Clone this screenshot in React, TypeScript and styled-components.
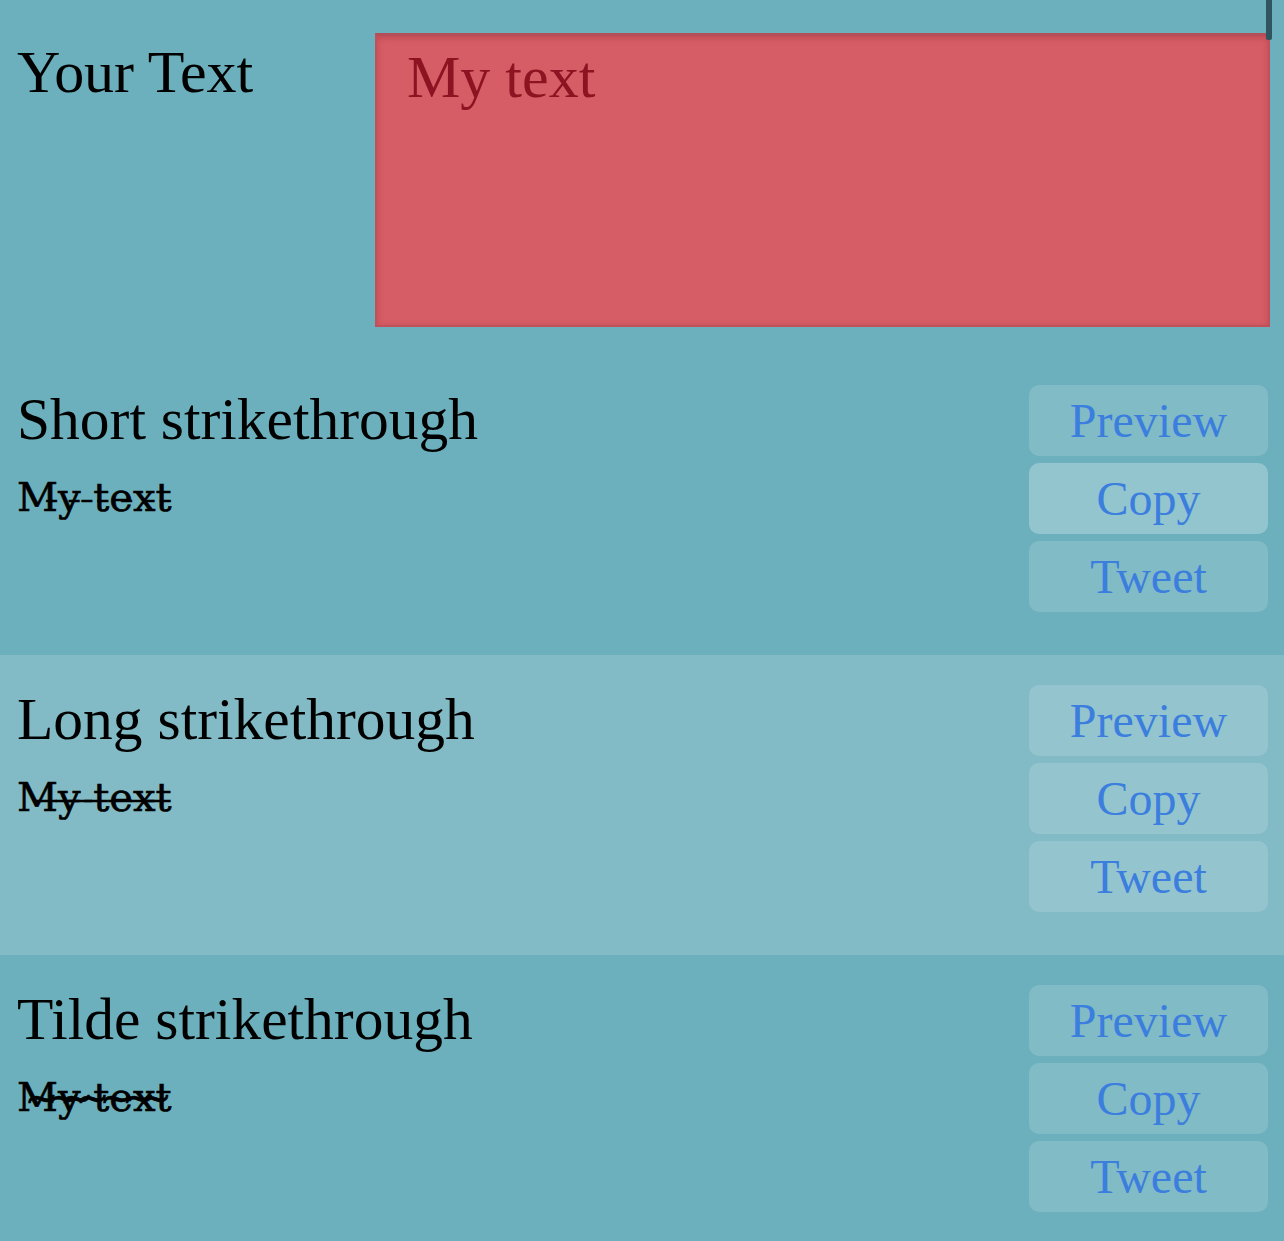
import React from "react";
import styled, { createGlobalStyle } from "styled-components";

const Global = createGlobalStyle`
  html, body { margin: 0; padding: 0; }
  body {
    background: #6cb0bd;
    font-family: "Liberation Serif", "Times New Roman", serif;
    color: #000;
  }
`;

const Page = styled.div`
  position: relative;
  width: 1284px;
  min-height: 1241px;
  background: #6cb0bd;
  overflow: hidden;
`;

const ScrollMark = styled.div`
  position: absolute;
  top: 0;
  left: 1266px;
  width: 6px;
  height: 40px;
  background: #2f5560;
  border-radius: 0 0 2px 2px;
`;

const InputSection = styled.section`
  display: flex;
  align-items: flex-start;
  height: 355px;
  padding: 33px 14px 0 17px;
  box-sizing: border-box;
`;

const Label = styled.label`
  width: 358px;
  flex: none;
  font-size: 60px;
  line-height: 60px;
  margin-top: 9px;
  letter-spacing: -0.1px;
`;

const TextBox = styled.textarea`
  flex: 1;
  height: 294px;
  box-sizing: border-box;
  margin: 0;
  padding: 7px 30px;
  background: #d65d65;
  border: 2px solid #c0505a;
  border-top: 3px solid #b44f59;
  border-radius: 0;
  box-shadow: inset 0 2px 6px rgba(120, 20, 30, 0.25);
  color: #8c1422;
  font-family: "Liberation Serif", "Times New Roman", serif;
  font-size: 60px;
  line-height: 1.15;
  resize: none;
  outline: none;
`;

const Row = styled.section<{ $light?: boolean }>`
  display: flex;
  justify-content: space-between;
  align-items: flex-start;
  height: 300px;
  box-sizing: border-box;
  padding: 30px 16px 0 17px;
  background: ${(p) => (p.$light ? "#82bbc6" : "transparent")};
`;

const Info = styled.div`
  display: flex;
  flex-direction: column;
  padding-top: 4px;
`;

const Title = styled.h2`
  margin: 0;
  font-weight: 400;
  font-size: 59.5px;
  line-height: 60px;
`;

const Sample = styled.div`
  margin-top: 21px;
  font-family: "DejaVu Serif", "Liberation Serif", serif;
  font-size: 40px;
  line-height: 55px;
  height: 55px;
  white-space: pre;
  -webkit-text-stroke: 0.6px #000;
`;

const Buttons = styled.div`
  display: flex;
  flex-direction: column;
  gap: 7px;
  width: 239px;
`;

const Btn = styled.button<{ $active?: boolean }>`
  height: 71px;
  border: none;
  border-radius: 10px;
  background: ${(p) =>
    p.$active ? "rgba(255,255,255,0.27)" : "rgba(255,255,255,0.15)"};
  color: #3b7ede;
  font-family: "Liberation Serif", "Times New Roman", serif;
  font-size: 48px;
  line-height: 71px;
  padding: 0;
  cursor: pointer;
`;

const strike = (text: string, mark: string) =>
  Array.from(text)
    .map((c) => c + mark)
    .join("");

const rows = [
  { title: "Short strikethrough", mark: "\u0335", light: false, active: true },
  { title: "Long strikethrough", mark: "\u0336", light: true, active: false },
  { title: "Tilde strikethrough", mark: "\u0334", light: false, active: false },
];

export default function App() {
  return (
    <Page>
      <Global />
      <InputSection>
        <Label htmlFor="txt">Your Text</Label>
        <TextBox id="txt" defaultValue="My text" />
      </InputSection>
      {rows.map((r) => (
        <Row key={r.title} $light={r.light}>
          <Info>
            <Title>{r.title}</Title>
            <Sample>{strike("My text", r.mark)}</Sample>
          </Info>
          <Buttons>
            <Btn>Preview</Btn>
            <Btn $active={r.active}>Copy</Btn>
            <Btn>Tweet</Btn>
          </Buttons>
        </Row>
      ))}
      <ScrollMark />
    </Page>
  );
}
